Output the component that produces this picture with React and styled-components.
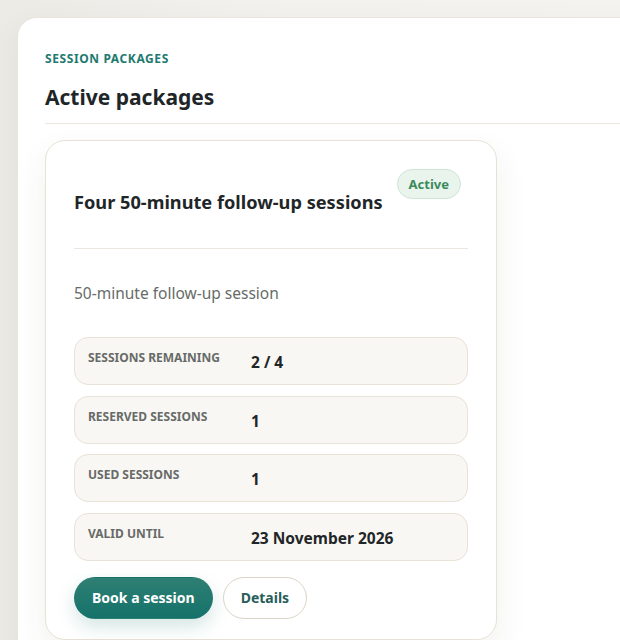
import React from 'react';
import styled, { createGlobalStyle } from 'styled-components';

const GlobalStyle = createGlobalStyle`
  html, body {
    margin: 0;
    padding: 0;
    overflow: hidden;
  }
  body {
    background: linear-gradient(90deg, #ebeae5 0%, #f2f1ed 40%, #f4f3ef 100%);
    font-family: 'Noto Sans', 'Open Sans', sans-serif;
    color: #1f2a2b;
  }
`;

const Page = styled.div`
  padding: 17px 0 0 17px;
  height: 640px;
  box-sizing: border-box;
`;

const Panel = styled.section`
  width: 760px;
  min-height: 700px;
  box-sizing: border-box;
  background: #ffffff;
  border: 1px solid #e9e5dd;
  border-radius: 20px;
  padding: 33px 27px;
  box-shadow: 0 10px 30px rgba(60, 50, 30, 0.06);
`;

const Eyebrow = styled.div`
  font-size: 12px;
  font-weight: 700;
  letter-spacing: 0.05em;
  text-transform: uppercase;
  color: #1d7a6f;
  line-height: 16px;
`;

const Heading = styled.h2`
  margin: 15px 0 0;
  font-size: 21px;
  font-weight: 700;
  line-height: 30px;
  color: #1f2628;
  padding-bottom: 11px;
  border-bottom: 1px solid #ebe7e0;
`;

const CardList = styled.div`
  display: flex;
  flex-direction: column;
  gap: 20px;
  padding-top: 16px;
`;

const Card = styled.article`
  width: 452px;
  box-sizing: border-box;
  background: #ffffff;
  border: 1px solid #e8e1d6;
  border-radius: 20px;
  padding: 28px 28px 20px;
  box-shadow: 0 14px 34px rgba(60, 50, 30, 0.07);
`;

const CardHeader = styled.div`
  display: flex;
  justify-content: space-between;
  align-items: flex-start;
  gap: 12px;
  padding-bottom: 33px;
  border-bottom: 1px solid #ebe6de;
`;

const Title = styled.h3`
  margin: 21px 0 0;
  font-size: 18.2px;
  font-weight: 700;
  line-height: 25px;
  color: #1f2628;
`;

const Badge = styled.span`
  flex-shrink: 0;
  margin-right: 7px;
  height: 30px;
  box-sizing: border-box;
  display: inline-flex;
  align-items: center;
  padding: 0 11px;
  border-radius: 999px;
  background: #e9f4ec;
  border: 1px solid #cfe5d6;
  color: #3b8a5c;
  font-size: 13px;
  font-weight: 700;
`;

const Description = styled.p`
  margin: 33px 0 0;
  font-size: 15.5px;
  line-height: 22px;
  color: #676b68;
`;

const Stats = styled.div`
  display: flex;
  flex-direction: column;
  gap: 10.5px;
  margin-top: 33px;
`;

const StatRow = styled.div`
  display: grid;
  grid-template-columns: 163px 1fr;
  align-items: start;
  min-height: 48px;
  box-sizing: border-box;
  padding: 12px 13px 0;
  background: #f9f7f3;
  border: 1px solid #e8e2d7;
  border-radius: 14px;
`;

const StatLabel = styled.span`
  font-size: 12px;
  font-weight: 700;
  text-transform: uppercase;
  color: #676b68;
  line-height: 16px;
`;

const StatValue = styled.span`
  font-size: 15.5px;
  font-weight: 700;
  line-height: 22px;
  color: #1f2628;
  margin-top: 1px;
`;

const Actions = styled.div`
  display: flex;
  gap: 10px;
  margin-top: 16px;
`;

const Button = styled.button`
  height: 42px;
  padding: 0 17px;
  border-radius: 999px;
  font-family: inherit;
  font-size: 14px;
  font-weight: 700;
  cursor: pointer;
  border: 1px solid ${(p) => (p.$primary ? 'transparent' : '#ddd4c7')};
  background: ${(p) =>
    p.$primary ? 'linear-gradient(180deg, #2f7f73 0%, #15726a 100%)' : '#ffffff'};
  color: ${(p) => (p.$primary ? '#ffffff' : '#275e5b')};
  box-shadow: ${(p) => (p.$primary ? '0 8px 18px rgba(21, 114, 106, 0.18)' : 'none')};
`;

const pkg = {
  title: 'Four 50-minute follow-up sessions',
  status: 'Active',
  description: '50-minute follow-up session',
  stats: [
    { label: 'Sessions remaining', value: '2 / 4' },
    { label: 'Reserved sessions', value: '1' },
    { label: 'Used sessions', value: '1' },
    { label: 'Valid until', value: '23 November 2026' },
  ],
};

export default function App() {
  return (
    <>
      <GlobalStyle />
      <Page>
        <Panel>
          <Eyebrow>Session packages</Eyebrow>
          <Heading>Active packages</Heading>
          <CardList>
            <Card>
              <CardHeader>
                <Title>{pkg.title}</Title>
                <Badge>{pkg.status}</Badge>
              </CardHeader>
              <Description>{pkg.description}</Description>
              <Stats>
                {pkg.stats.map((s) => (
                  <StatRow key={s.label}>
                    <StatLabel>{s.label}</StatLabel>
                    <StatValue>{s.value}</StatValue>
                  </StatRow>
                ))}
              </Stats>
              <Actions>
                <Button $primary>Book a session</Button>
                <Button>Details</Button>
              </Actions>
            </Card>
          </CardList>
        </Panel>
      </Page>
    </>
  );
}
